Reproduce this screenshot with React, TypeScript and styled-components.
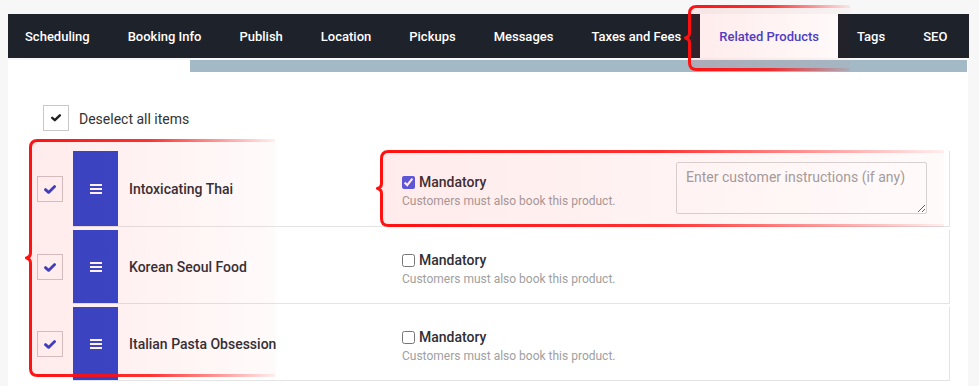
import React from 'react';
import styled, { createGlobalStyle } from 'styled-components';

const GlobalStyle = createGlobalStyle`
  html, body {
    margin: 0;
    padding: 0;
    background: #f7f7f7;
  }
  body {
    font-family: Roboto, "Liberation Sans", Arial, sans-serif;
    color: #333;
  }
  * {
    box-sizing: border-box;
  }
`;

const tabs = [
  'Scheduling',
  'Booking Info',
  'Publish',
  'Location',
  'Pickups',
  'Messages',
  'Taxes and Fees',
  'Related Products',
  'Tags',
  'SEO',
];

const products = [
  { name: 'Intoxicating Thai', mandatory: true, notes: true },
  { name: 'Korean Seoul Food', mandatory: false, notes: false },
  { name: 'Italian Pasta Obsession', mandatory: false, notes: false },
];

function CheckMark({ color, size }: { color: string; size: number }) {
  return (
    <svg width={size} height={size * 0.75} viewBox='0 0 12 9'>
      <path
        d='M1.5 4.6 L4.6 7.4 L10.6 1.6'
        fill='none'
        stroke={color}
        strokeWidth={2.8}
        strokeLinecap='round'
        strokeLinejoin='round'
      />
    </svg>
  );
}

function Bars() {
  return (
    <svg width={12} height={10} viewBox='0 0 12 10'>
      <rect x={0} y={0} width={12} height={2} fill='#fff' />
      <rect x={0} y={4} width={12} height={2} fill='#fff' />
      <rect x={0} y={8} width={12} height={2} fill='#fff' />
    </svg>
  );
}

interface MarkerProps {
  id: string;
  left: number;
  top: number;
  width: number;
  height: number;
}

// red "brace" highlight drawn over the page
function Marker({ id, left, top, width, height }: MarkerProps) {
  const s = 1.5;
  const x0 = 5.5;
  const r = 7;
  const m = height / 2;
  const edge =
    `M ${width} ${s} H ${x0 + r} Q ${x0} ${s} ${x0} ${s + r} ` +
    `V ${m - 5} Q ${x0} ${m - 1} ${s} ${m} Q ${x0} ${m + 1} ${x0} ${m + 5} ` +
    `V ${height - s - r} Q ${x0} ${height - s} ${x0 + r} ${height - s} H ${width}`;
  return (
    <MarkerBox $left={left} $top={top} $width={width} $height={height}>
      <svg width={width} height={height} viewBox={`0 0 ${width} ${height}`}>
        <defs>
          <linearGradient id={`${id}-fill`} x1='0' x2='1' y1='0' y2='0'>
            <stop offset='0' stopColor='#ff2020' stopOpacity={0.09} />
            <stop offset='1' stopColor='#ff2020' stopOpacity={0.02} />
          </linearGradient>
          <linearGradient id={`${id}-line`} x1='0' x2='1' y1='0' y2='0'>
            <stop offset='0' stopColor='#ff1010' stopOpacity={1} />
            <stop offset='0.5' stopColor='#ff1010' stopOpacity={0.85} />
            <stop offset='1' stopColor='#ff1010' stopOpacity={0.06} />
          </linearGradient>
        </defs>
        <path d={`${edge} Z`} fill={`url(#${id}-fill)`} />
        <path
          d={edge}
          fill='none'
          stroke={`url(#${id}-line)`}
          strokeWidth={3}
          strokeLinejoin='round'
        />
      </svg>
    </MarkerBox>
  );
}

export default function App() {
  return (
    <>
      <GlobalStyle />
      <Page>
        <Nav>
          {tabs.map((t) => (
            <Tab key={t} $active={t === 'Related Products'}>
              {t}
            </Tab>
          ))}
        </Nav>
        <Panel>
          <Progress />
          <Body>
            <SelectAll>
              <BoxCheck $tinted={false}>
                <CheckMark color='#1f1f24' size={10} />
              </BoxCheck>
              <span>Deselect all items</span>
            </SelectAll>
            <List>
              {products.map((p) => (
                <Item key={p.name}>
                  <BoxCheck $tinted>
                    <CheckMark color='#3040cc' size={12} />
                  </BoxCheck>
                  <Card>
                    <Handle>
                      <Bars />
                    </Handle>
                    <Title>{p.name}</Title>
                    <Mandatory>
                      <MandatoryLabel>
                        <NativeCheck type='checkbox' defaultChecked={p.mandatory} />
                        Mandatory
                      </MandatoryLabel>
                      <Hint>Customers must also book this product.</Hint>
                    </Mandatory>
                    {p.notes && (
                      <Notes placeholder='Enter customer instructions (if any)' />
                    )}
                  </Card>
                </Item>
              ))}
            </List>
          </Body>
        </Panel>
        <Marker id='m-tab' left={684} top={5} width={166} height={66} />
        <Marker id='m-rows' left={25} top={139} width={250} height={238} />
        <Marker id='m-opt' left={376} top={150} width={568} height={77} />
      </Page>
    </>
  );
}

const Page = styled.div`
  position: relative;
  height: 386px;
  overflow: hidden;
  padding: 14px 10px 0 8px;
`;

const Nav = styled.nav`
  display: flex;
  height: 44px;
  background: #1e222b;
`;

const Tab = styled.div<{ $active: boolean }>`
  display: flex;
  align-items: center;
  padding: 0 19px;
  font-size: 13px;
  font-weight: 500;
  white-space: nowrap;
  color: ${(p) => (p.$active ? '#4540cc' : '#fff')};
  background: ${(p) => (p.$active ? '#fff' : 'transparent')};

  &:first-child {
    padding-left: 17px;
  }
`;

const Panel = styled.div`
  background: #fff;
  margin-right: 1px;
  height: 328px;
`;

const Progress = styled.div`
  height: 12px;
  margin: 2px 1px 0 182px;
  background: #a3b9c6;
`;

const Body = styled.div`
  padding: 33px 18px 0 29px;
`;

const SelectAll = styled.div`
  display: flex;
  align-items: center;
  gap: 10px;
  margin-left: 6px;
  font-size: 14px;
  line-height: 18px;
  color: #333;

  span {
    padding-top: 2px;
  }
`;

const BoxCheck = styled.div<{ $tinted: boolean }>`
  width: 26px;
  height: 26px;
  flex: none;
  display: flex;
  align-items: center;
  justify-content: center;
  border: 1px solid ${(p) => (p.$tinted ? '#d2c8ca' : '#c9c9c9')};
  background: #fff;
`;

const List = styled.div`
  display: flex;
  flex-direction: column;
  gap: 3px;
  margin-top: 20px;
`;

const Item = styled.div`
  display: flex;
  align-items: center;
  gap: 10px;
`;

const Card = styled.div`
  flex: 1;
  display: flex;
  align-items: center;
  min-height: 74px;
  border-right: 1px solid #e4e4e4;
  border-bottom: 1px solid #e4e4e4;
`;

const Handle = styled.div`
  align-self: stretch;
  width: 45px;
  flex: none;
  display: flex;
  align-items: center;
  justify-content: center;
  background: #2d46cd;
`;

const Title = styled.div`
  width: 284px;
  flex: none;
  padding-left: 11px;
  font-size: 14px;
  font-weight: 500;
  color: #2f2f35;
`;

const Mandatory = styled.div`
  width: 274px;
  flex: none;
  display: flex;
  flex-direction: column;
  padding-top: 5px;
`;

const MandatoryLabel = styled.label`
  display: flex;
  align-items: center;
  font-size: 14px;
  font-weight: 500;
  line-height: 18px;
  color: #2f2f35;
`;

const NativeCheck = styled.input`
  width: 13px;
  height: 13px;
  margin: 0 4px 0 0;
  accent-color: #4f5ce6;
`;

const Hint = styled.div`
  margin-top: 2px;
  font-size: 12px;
  line-height: 16px;
  color: #a0a0a0;
`;

const Notes = styled.textarea`
  width: 251px;
  height: 52px;
  margin: 11px 0 12px;
  padding: 6px 9px;
  border: 1px solid #d6d6d6;
  border-radius: 2px;
  font-family: Roboto, "Liberation Sans", Arial, sans-serif;
  font-size: 14px;
  color: #333;
  background: #fff;

  &::placeholder {
    color: #a0a0a0;
  }
`;

const MarkerBox = styled.div<{ $left: number; $top: number; $width: number; $height: number }>`
  position: absolute;
  left: ${(p) => p.$left}px;
  top: ${(p) => p.$top}px;
  width: ${(p) => p.$width}px;
  height: ${(p) => p.$height}px;
  pointer-events: none;

  svg {
    display: block;
  }
`;
